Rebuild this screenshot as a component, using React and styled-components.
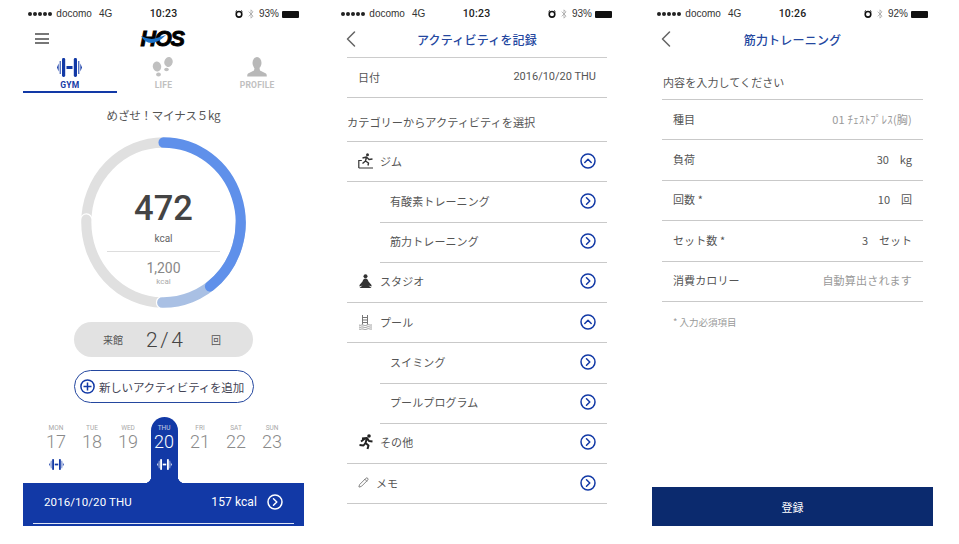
import React from "react";
import styled, { createGlobalStyle } from "styled-components";
import { ChevronLeft, Pencil, Bluetooth } from "lucide-react";

const navy = "#1239a6";
const ink = "#555";
const CJK = `"Noto Sans CJK JP", sans-serif`;
const UI = `Roboto, "Noto Sans CJK JP", sans-serif`;

const Global = createGlobalStyle`
  html, body { margin: 0; padding: 0; background: #fff; }
  body { font-family: ${UI}; color: ${ink}; width: 959px; height: 544px; overflow: hidden; }
  * { box-sizing: border-box; }
`;

const Page = styled.div`
  display: grid;
  grid-template-columns: 313px 316px 281px;
  padding-left: 23px;
`;
const Phone = styled.section`
  width: 281px;
  height: 526px;
  display: flex;
  flex-direction: column;
`;

/* status bar */
const Status = styled.div`
  height: 20px;
  padding: 8px 5px 0;
  display: grid;
  grid-template-columns: 1fr auto 1fr;
  align-items: center;
  font: 10px/12px "Liberation Sans", sans-serif;
  color: #333;
`;
const StatusLeft = styled.div`
  display: flex;
  align-items: center;
`;
const Dots = styled.span`
  display: flex;
  gap: 0.6px;
  margin-right: 4px;
  & > i { width: 4.4px; height: 4.4px; border-radius: 50%; background: #222; }
`;
const Net = styled.span`
  margin-left: 7px;
`;
const Time = styled.div`
  font: 500 10.500px/12px Roboto, sans-serif;
  color: #222;
  letter-spacing: 0.2px;
`;
const StatusRight = styled.div`
  display: flex;
  justify-content: flex-end;
  align-items: center;
  gap: 3px;
`;
const Battery = styled.span`
  width: 17px;
  height: 7px;
  background: #111;
  border-radius: 1px;
`;

const AlarmIcon = () => (
  <svg width="8" height="8" viewBox="0 0 8 8">
    <circle cx="4" cy="4.300" r="2.800" fill="none" stroke="#111" strokeWidth="1.600" />
    <path d="M.5 1.800 2 .5M7.500 1.800 6 .5" stroke="#111" />
  </svg>
);

const Bar = ({ time, pct }) => (
  <Status>
    <StatusLeft>
      <Dots><i /><i /><i /><i /><i /></Dots>
      docomo<Net>4G</Net>
    </StatusLeft>
    <Time>{time}</Time>
    <StatusRight>
      <AlarmIcon />
      <Bluetooth size={10} color="#999" strokeWidth={1.6} />
      <span>{pct}</span>
      <Battery />
    </StatusRight>
  </Status>
);

/* home screen */
const TopRow = styled.header`
  height: 37px;
  padding: 0 12px;
  display: grid;
  grid-template-columns: 1fr auto 1fr;
  align-items: center;
`;
const Burger = styled.div`
  width: 14px;
  height: 11px;
  border-top: 2px solid #777;
  border-bottom: 2px solid #777;
  position: relative;
  &::after {
    content: "";
    position: absolute;
    left: 0;
    right: 0;
    top: 2.500px;
    height: 2px;
    background: #777;
  }
`;
const Logo = styled.div`
  position: relative;
  font: italic 700 21.500px/22px "Liberation Sans", sans-serif;
  -webkit-text-stroke: 0.9px #000;
  color: #000;
  letter-spacing: -1.100px;
  width: 44px;
  margin-right: 2px;
  & > svg { position: absolute; left: 0; top: 7px; }
`;
const Tabs = styled.nav`
  display: grid;
  grid-template-columns: repeat(3, 1fr);
  height: 36px;
`;
const Tab = styled.div`
  display: flex;
  flex-direction: column;
  align-items: center;
  border-bottom: 2px solid ${(p) => (p.$on ? navy : "transparent")};
  height: 36px;
  font: 700 8.500px/10px Roboto, sans-serif;
  letter-spacing: 0.2px;
  color: ${(p) => (p.$on ? navy : "#c0c0c0")};
  & > svg { margin-bottom: 2px; height: 21px; }
`;
const Goal = styled.h2`
  margin: 14px 0 0;
  height: 16px;
  text-align: center;
  font: 400 11.500px/16px ${CJK};
  color: #555;
  letter-spacing: -0.2px;
`;
const RingBox = styled.div`
  position: relative;
  width: 165px;
  height: 171px;
  margin: 14px 0 0 58px;
  & > svg { display: block; }
`;
const RingText = styled.div`
  position: absolute;
  left: 26px;
  top: 50px;
  width: 113px;
  display: flex;
  flex-direction: column;
  align-items: center;
`;
const Big = styled.div`
  font: 500 34.500px/42px Roboto, sans-serif;
  color: #444;
`;
const Kcal = styled.div`
  font: 400 10px/13px Roboto, sans-serif;
  color: #666;
  margin-top: 3px;
  width: 100%;
  text-align: center;
  padding-bottom: 6px;
  border-bottom: 1px solid #ddd;
`;
const Target = styled.div`
  font: 400 14px/18px Roboto, sans-serif;
  color: #888;
  margin-top: 7px;
`;
const SmallKcal = styled.div`
  font: 400 8px/10px Roboto, sans-serif;
  color: #aaa;
`;
const Visits = styled.div`
  width: 179px;
  height: 35px;
  margin: 14px 0 0 51px;
  border-radius: 18px;
  background: #e2e2e2;
  display: flex;
  align-items: center;
  padding-left: 29px;
  font: 400 10px/14px ${CJK};
  color: #555;
`;
const VisitNum = styled.span`
  font: 300 21px/26px Roboto, sans-serif;
  color: #444;
  word-spacing: -2.500px;
  width: 37px;
  margin: 0 28px 0 23px;
  text-align: center;
  white-space: nowrap;
`;
const AddBtn = styled.button`
  width: 180px;
  height: 33px;
  margin: 13px 0 0 51px;
  border: 1.500px solid #24479f;
  border-radius: 17px;
  background: #fff;
  display: flex;
  align-items: center;
  gap: 4px;
  padding: 0 0 0 5px;
  font: 400 11.500px/14px ${CJK};
  letter-spacing: -0.200px;
  color: #445;
`;
const Week = styled.div`
  display: grid;
  grid-template-columns: repeat(7, 36px);
  padding-left: 15px;
  margin-top: 14px;
  height: 66px;
`;
const Day = styled.div`
  position: relative;
  justify-self: center;
  width: 27px;
  height: 66px;
  padding-top: 7px;
  display: flex;
  flex-direction: column;
  align-items: center;
  border-radius: 14px 14px 0 0;
  background: ${(p) => (p.$on ? navy : "transparent")};
  color: ${(p) => (p.$on ? "#fff" : "#8a8a8a")};
  ${(p) =>
    p.$on
      ? `&::before, &::after {
          content: "";
          position: absolute;
          bottom: 0;
          width: 7px;
          height: 7px;
        }
        &::before { left: -7px; background: radial-gradient(circle at 0 0, transparent 7px, ${navy} 7.500px); }
        &::after { right: -7px; background: radial-gradient(circle at 100% 0, transparent 7px, ${navy} 7.500px); }`
      : ""}
`;
const DayName = styled.span`
  font: 400 6.500px/8px Roboto, sans-serif;
  opacity: 0.75;
`;
const DayNum = styled.span`
  font: 300 18px/16px Roboto, sans-serif;
  margin: 2px 0 9px;
`;
const Summary = styled.div`
  height: 43px;
  background: ${navy};
  padding: 0 10px;
  color: #fff;
`;
const SummaryRow = styled.div`
  height: 41px;
  padding: 0 11px 3px;
  display: flex;
  align-items: center;
  justify-content: space-between;
  font: 400 11.500px/16px Roboto, sans-serif;
  letter-spacing: 0.1px;
  border-bottom: 1px solid #dfe5f5;
`;
const SummaryRight = styled.span`
  display: flex;
  align-items: center;
  gap: 10px;
  font-size: 12px;
`;

/* list screens */
const Head = styled.header`
  height: 38px;
  margin: 0 10px 0 ${(p) => p.$left}px;
  padding-top: 2px;
  position: relative;
  display: flex;
  align-items: center;
  justify-content: center;
  font: 500 12px/16px ${CJK};
  letter-spacing: 0.2px;
  color: #24479f;
  border-bottom: ${(p) => (p.$line ? "1.500px solid #ccc" : "0")};
`;
const Back = styled.span`
  position: absolute;
  left: -10px;
  top: 5px;
  color: #666;
  & > svg { display: block; }
`;
const Body = styled.div`
  padding: 0 10px 0 ${(p) => p.$left}px;
  display: flex;
  flex-direction: column;
  flex: 1;
`;
const Row = styled.div`
  height: 40.220px;
  flex: none;
  display: flex;
  align-items: center;
  border-bottom: 1px solid #c9c9c9;
  font: 400 11px/14px ${CJK};
  color: #555;
  margin-left: ${(p) => (p.$sub ? "33px" : "0")};
  padding: 0 11px 2px ${(p) => (p.$sub ? "10px" : "11px")};
`;
const FieldRow = styled(Row)`
  height: 40.400px;
`;
const RowIcon = styled.span`
  width: ${(p) => p.$w}px;
  flex: none;
  display: flex;
  & > svg { display: block; }
`;
const RowLabel = styled.span`
  flex: 1;
  letter-spacing: 0.1px;
`;
const Value = styled.span`
  color: ${(p) => (p.$muted ? "#999" : "#555")};
  font-size: 11px;
  letter-spacing: ${(p) => (p.$muted ? "0.2px" : "0")};
  display: flex;
  gap: 11px;
`;
const DateVal = styled.span`
  font: 400 11px/14px Roboto, sans-serif;
  color: #555;
`;
const Section = styled.h3`
  margin: 0;
  height: 44px;
  flex: none;
  padding-top: 17px;
  font: 400 11.200px/14px ${CJK};
  color: #555;
  border-bottom: 1px solid #c9c9c9;
`;
const Prompt = styled.h3`
  margin: 0;
  height: 42px;
  flex: none;
  padding: 17px 0 0 1px;
  font: 400 11px/14px ${CJK};
  letter-spacing: 0.1px;
  color: #555;
  border-bottom: 1px solid #c9c9c9;
`;
const Note = styled.p`
  margin: 14px 0 0 11px;
  font: 400 9.500px/12px ${CJK};
  color: #999;
`;
const Submit = styled.button`
  margin-top: auto;
  flex: none;
  height: 39px;
  border: 0;
  background: #0b2a6e;
  color: #fff;
  font: 400 11px/14px ${CJK};
`;

/* drawn icons */
const Dumbbell = ({ w = 25, h = 19, c = navy }) => (
  <svg width={w} height={h} viewBox="0 0 25 19" style={{ display: "block" }}>
    <g fill={c}>
      <path d="M1.600 5.500v8L0 9.500z" />
      <rect x="2.700" y="3" width="1" height="13" />
      <rect x="5" y="0" width="3.200" height="19" rx="1.400" />
      <rect x="9.500" y="8" width="6" height="3" />
      <rect x="16.800" y="0" width="3.200" height="19" rx="1.400" />
      <rect x="21.300" y="3" width="1" height="13" />
      <path d="M23.400 5.500v8l1.600-4z" />
    </g>
  </svg>
);
const Feet = () => (
  <svg width="22" height="21" viewBox="0 0 22 21">
    <g fill="#c0c0c0">
      <ellipse cx="16.500" cy="5" rx="4.200" ry="5" transform="rotate(12 16.500 5)" />
      <ellipse cx="14.500" cy="12.500" rx="2.300" ry="1.800" />
      <ellipse cx="5" cy="9.500" rx="4.200" ry="5" transform="rotate(-10 5 9.500)" />
      <ellipse cx="6.500" cy="17.500" rx="2.400" ry="2" />
    </g>
  </svg>
);
const Person = () => (
  <svg width="20" height="21" viewBox="0 0 20 21">
    <g fill="#b8b8b8">
      <ellipse cx="10" cy="6" rx="4.500" ry="6" />
      <path d="M7.500 11 7 13.500 1 16.500Q.2 17 .2 19v.5h19.600V19q0-2-.8-2.500l-6-3L12.500 11z" />
    </g>
  </svg>
);
const Swoosh = () => (
  <svg width="26" height="9" viewBox="0 0 26 9">
    <path d="M0 1Q8 5 14 3.500L25 0Q17 8 10 8 4 8 0 1z" fill="#1e73c8" />
  </svg>
);
const Round = ({ dir = "right", size = 16, c = navy, w = 1.500 }) => (
  <svg width={size} height={size} viewBox="0 0 16 16" style={{ display: "block", flex: "none" }}>
    <circle cx="8" cy="8" r="7" fill="none" stroke={c} strokeWidth={w} />
    <path
      d={dir === "up" ? "M4.800 9.500 8 6.200l3.200 3.300" : "M6.500 4.800 9.800 8l-3.300 3.200"}
      fill="none"
      stroke={c}
      strokeWidth={w}
      strokeLinecap="round"
      strokeLinejoin="round"
    />
  </svg>
);
const PlusRound = () => (
  <svg width="15" height="15" viewBox="0 0 15 15" style={{ display: "block", flex: "none" }}>
    <circle cx="7.500" cy="7.500" r="6.600" fill="none" stroke={navy} strokeWidth="1.500" />
    <path d="M3.500 7.500h8M7.500 3.500v8" stroke={navy} strokeWidth="1.500" />
  </svg>
);
const GymIcon = () => (
  <svg width="16" height="16" viewBox="0 0 16 16">
    <circle cx="9.500" cy="1.800" r="1.500" fill="#333" />
    <path d="M4.500 5 8.500 4l2.500 2.500 3.500-.5M8.500 4 7.500 8l3 2-.5 2.500M7.500 8 4.500 10.500" fill="none" stroke="#333" strokeWidth="1.400" strokeLinejoin="round" />
    <path d="M.8 15V7.500h3M.8 15H15" fill="none" stroke="#333" strokeWidth="1.200" />
  </svg>
);
const StudioIcon = () => (
  <svg width="15" height="15" viewBox="0 0 15 15">
    <circle cx="7.500" cy="2.200" r="2" fill="#333" />
    <path d="M7.500 4.500c-2 0-2.500 1.500-3 3L1.500 11v1.500l3-1-3 2.500h12l-3-2.500 3 1V11l-3-3.500c-.5-1.500-1-3-3-3z" fill="#333" />
  </svg>
);
const PoolIcon = () => (
  <svg width="16" height="16" viewBox="0 0 16 16">
    <path d="M4.500 1v9.500M9.500 1v9.500M4.500 3.500h5M4.500 6h5M4.500 8.500h5" stroke="#777" fill="none" />
    <path d="M1 11c2 1 2-.5 4 0s2 1 4 0 2 .5 5 0M1 13c2 1 2-.5 4 0s2 1 4 0 2 .5 5 0M1 15c2 1 2-.5 4 0s2 1 4 0 2 .5 5 0" stroke="#888" strokeWidth=".8" fill="none" />
  </svg>
);
const RunIcon = () => (
  <svg width="16" height="16" viewBox="0 0 16 16">
    <circle cx="11" cy="2" r="1.800" fill="#222" />
    <path d="M4 4.500 9 4l2 3 3.500.5M9 4 7.500 9l3 2.500-1 3.500M7.500 9l-2 2.500L1.500 11M3 7.500l4-3" fill="none" stroke="#222" strokeWidth="2" strokeLinejoin="round" />
  </svg>
);

/* progress ring */
const C = 85.5;
const R = 80;
const pt = (a) => {
  const t = ((a - 90) * Math.PI) / 180;
  return `${C + R * Math.cos(t)} ${C + R * Math.sin(t)}`;
};
const arc = (a, b) => `M${pt(a)}A${R} ${R} 0 ${b - a > 180 ? 1 : 0} 1 ${pt(b)}`;
const Arc = ({ from, to, color, width = 10.5, cap = "round" }) => (
  <path d={arc(from, to)} fill="none" stroke={color} strokeWidth={width} strokeLinecap={cap} />
);
const Ring = () => (
  <svg width="165" height="171" viewBox="0 0 171 171" preserveAspectRatio="none">
    <Arc from={270} to={359.900} color="#e0e0e0" cap="butt" />
    <Arc from={181} to={272} color="#fff" width={13} />
    <Arc from={181} to={272} color="#e0e0e0" />
    <Arc from={88} to={181} color="#fff" width={13} />
    <Arc from={90} to={181} color="#a9c0e4" />
    <Arc from={0} to={143} color="#5f90ea" />
  </svg>
);

const days = [
  ["MON", 17, true], ["TUE", 18], ["WED", 19], ["THU", 20, true, true],
  ["FRI", 21], ["SAT", 22], ["SUN", 23],
];

const Home = () => (
  <Phone>
    <Bar time="10:23" pct="93%" />
    <TopRow>
      <Burger />
      <Logo>HOS<Swoosh /></Logo>
      <span />
    </TopRow>
    <Tabs>
      <Tab $on><Dumbbell />GYM</Tab>
      <Tab><Feet />LIFE</Tab>
      <Tab><Person />PROFILE</Tab>
    </Tabs>
    <Goal>めざせ！マイナス５kg</Goal>
    <RingBox>
      <Ring />
      <RingText>
        <Big>472</Big>
        <Kcal>kcal</Kcal>
        <Target>1,200</Target>
        <SmallKcal>kcal</SmallKcal>
      </RingText>
    </RingBox>
    <Visits>
      <span>来館</span>
      <VisitNum>2 / 4</VisitNum>
      <span>回</span>
    </Visits>
    <AddBtn><PlusRound />新しいアクティビティを追加</AddBtn>
    <Week>
      {days.map(([n, d, mark, on]) => (
        <Day key={n} $on={on}>
          <DayName>{n}</DayName>
          <DayNum>{d}</DayNum>
          {mark ? <Dumbbell w={15} h={11} c={on ? "#fff" : navy} /> : null}
        </Day>
      ))}
    </Week>
    <Summary>
      <SummaryRow>
        <span>2016/10/20 THU</span>
        <SummaryRight>157 kcal <Round c="#fff" /></SummaryRight>
      </SummaryRow>
    </Summary>
  </Phone>
);

const Nav = ({ title, line, left }) => (
  <Head $line={line} $left={left}>
    <Back><ChevronLeft size={28} strokeWidth={1.3} /></Back>
    {title}
  </Head>
);

const activity = [
  { label: "ジム", icon: <GymIcon />, dir: "up" },
  { label: "有酸素トレーニング", sub: true },
  { label: "筋力トレーニング", sub: true },
  { label: "スタジオ", icon: <StudioIcon /> },
  { label: "プール", icon: <PoolIcon />, dir: "up" },
  { label: "スイミング", sub: true },
  { label: "プールプログラム", sub: true },
  { label: "その他", icon: <RunIcon /> },
  { label: "メモ", icon: <Pencil size={11} strokeWidth={1.4} color="#444" />, w: 18 },
];

const Activity = () => (
  <Phone>
    <Bar time="10:23" pct="93%" />
    <Nav title="アクティビティを記録" line left={11} />
    <Body $left={11}>
      <Row>
        <RowLabel>日付</RowLabel>
        <DateVal>2016/10/20 THU</DateVal>
      </Row>
      <Section>カテゴリーからアクティビティを選択</Section>
      {activity.map((a) => (
        <Row key={a.label} $sub={a.sub}>
          {a.icon ? <RowIcon $w={a.w || 22}>{a.icon}</RowIcon> : null}
          <RowLabel>{a.label}</RowLabel>
          <Round dir={a.dir} />
        </Row>
      ))}
    </Body>
  </Phone>
);

const Training = () => (
  <Phone>
    <Bar time="10:26" pct="92%" />
    <Nav title="筋力トレーニング" left={10} />
    <Body $left={10}>
      <Prompt>内容を入力してください</Prompt>
      <FieldRow>
        <RowLabel>種目</RowLabel>
        <Value $muted>01 ﾁｪｽﾄﾌﾟﾚｽ(胸)</Value>
      </FieldRow>
      <FieldRow>
        <RowLabel>負荷</RowLabel>
        <Value><span>30</span><span>kg</span></Value>
      </FieldRow>
      <FieldRow>
        <RowLabel>回数 *</RowLabel>
        <Value><span>10</span><span>回</span></Value>
      </FieldRow>
      <FieldRow>
        <RowLabel>セット数 *</RowLabel>
        <Value><span>3</span><span>セット</span></Value>
      </FieldRow>
      <FieldRow>
        <RowLabel>消費カロリー</RowLabel>
        <Value $muted>自動算出されます</Value>
      </FieldRow>
      <Note>* 入力必須項目</Note>
    </Body>
    <Submit>登録</Submit>
  </Phone>
);

export default function App() {
  return (
    <>
      <Global />
      <Page>
        <Home />
        <Activity />
        <Training />
      </Page>
    </>
  );
}
